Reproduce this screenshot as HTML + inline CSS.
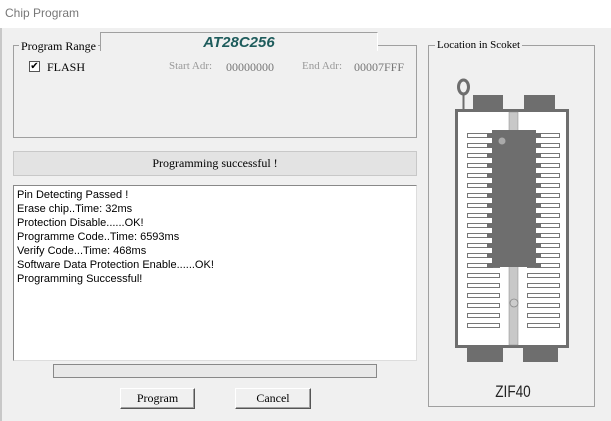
<!DOCTYPE html>
<html><head><style>
body{margin:0;width:611px;height:421px;background:#f0f0f0;position:relative;overflow:hidden;font-family:"Liberation Serif",serif;font-size:11px;}
.a{position:absolute}
.title{left:0;top:0;width:611px;height:28px;background:#fff;}
.title span{position:absolute;left:5px;top:6px;font-family:"Liberation Sans",sans-serif;font-size:12px;color:#777}
.grp{border:1px solid #a0a0a0;box-sizing:border-box}
.lbl{background:#f0f0f0;padding:0 2px;color:#000}
.log div{font-family:"Liberation Sans",sans-serif;font-size:11px;height:14px;line-height:14px;color:#000}
.btn{background:#f0f0f0;border:1px solid;border-color:#fff #555 #555 #fff;box-shadow:inset -1px -1px 0 #a0a0a0;box-sizing:border-box;text-align:center;line-height:19px;font-size:12px}
.gray{color:#999}
</style></head><body>
<div class="a" style="left:0;top:0;width:2px;height:421px;background:#c8c8c8"></div>
<div class="a title"><span>Chip Program</span></div>

<div class="a grp" style="left:13px;top:45px;width:404px;height:93px"></div>
<div class="a lbl" style="left:19px;top:39px;font-size:12px">Program Range</div>
<div class="a" style="left:100px;top:32px;width:278px;height:19px;background:#f0f0f0;border-top:1px solid #a0a0a0;border-left:1px solid #a0a0a0;border-right:1px solid #fff;box-sizing:border-box;text-align:center;font-family:'Liberation Sans',sans-serif;font-weight:bold;font-style:italic;font-size:15px;color:#1e5c5c;line-height:19px">AT28C256</div>
<div class="a" style="left:29px;top:61px;width:11px;height:11px;background:#fff;border:1px solid #555;box-sizing:border-box;font-size:10px;line-height:9px;text-align:center;font-weight:bold;font-family:'DejaVu Sans',sans-serif">✔</div>
<div class="a" style="left:47px;top:60px;font-size:12px">FLASH</div>
<div class="a gray" style="left:169px;top:60px;font-size:11px">Start Adr:</div>
<div class="a" style="left:226px;top:60px;font-size:12px;color:#777">00000000</div>
<div class="a gray" style="left:302px;top:60px;font-size:11px">End Adr:</div>
<div class="a" style="left:354px;top:60px;font-size:12px;color:#777">00007FFF</div>

<div class="a" style="left:13px;top:151px;width:404px;height:25px;background:#e3e3e3;border:1px solid #c8c8c8;box-sizing:border-box;text-align:center;line-height:23px;font-size:12px">Programming successful !</div>

<div class="a log" style="left:13px;top:185px;width:404px;height:176px;background:#fff;border:1px solid;border-color:#888 #ddd #ddd #888;box-sizing:border-box;padding:2px 0 0 3px">
<div>Pin Detecting Passed !</div><div>Erase chip..Time: 32ms</div><div>Protection Disable......OK!</div><div>Programme Code..Time: 6593ms</div><div>Verify Code...Time: 468ms</div><div>Software Data Protection Enable......OK!</div><div>Programming Successful!</div></div>

<div class="a" style="left:53px;top:364px;width:324px;height:14px;border:1px solid #888;box-sizing:border-box;background:#e8e8e8"></div>
<div class="a btn" style="left:120px;top:388px;width:75px;height:21px">Program</div>
<div class="a btn" style="left:235px;top:388px;width:76px;height:21px">Cancel</div>

<div class="a grp" style="left:428px;top:45px;width:167px;height:362px"></div>
<div class="a lbl" style="left:435px;top:39px;font-size:11px">Location in Scoket</div>
<svg class="a" style="left:0;top:0" width="611" height="421">
<g fill="#6e6e6e">
<rect x="473" y="95" width="30" height="16"/><rect x="524" y="95" width="31" height="16"/>
<rect x="467" y="346" width="36" height="16"/><rect x="523" y="346" width="35" height="16"/>
</g>
<ellipse cx="463.5" cy="87" rx="5" ry="7" fill="none" stroke="#6e6e6e" stroke-width="3"/>
<line x1="463.5" y1="94" x2="463.5" y2="111" stroke="#6e6e6e" stroke-width="2"/>
<rect x="456.5" y="110.5" width="111" height="236" fill="#fff" stroke="#6e6e6e" stroke-width="3"/>
<rect x="509" y="112" width="9" height="233" fill="#c8c8c8" stroke="#888" stroke-width="0.5"/>
<g fill="#fff" stroke="#555" stroke-width="0.8" id="p">
<rect x="467.5" y="133.5" width="32" height="4"/><rect x="467.5" y="143.5" width="32" height="4"/><rect x="467.5" y="153.5" width="32" height="4"/><rect x="467.5" y="163.5" width="32" height="4"/><rect x="467.5" y="173.5" width="32" height="4"/><rect x="467.5" y="183.5" width="32" height="4"/><rect x="467.5" y="193.5" width="32" height="4"/><rect x="467.5" y="203.5" width="32" height="4"/><rect x="467.5" y="213.5" width="32" height="4"/><rect x="467.5" y="223.5" width="32" height="4"/><rect x="467.5" y="233.5" width="32" height="4"/><rect x="467.5" y="243.5" width="32" height="4"/><rect x="467.5" y="253.5" width="32" height="4"/><rect x="467.5" y="263.5" width="32" height="4"/><rect x="467.5" y="273.5" width="32" height="4"/><rect x="467.5" y="283.5" width="32" height="4"/><rect x="467.5" y="293.5" width="32" height="4"/><rect x="467.5" y="303.5" width="32" height="4"/><rect x="467.5" y="313.5" width="32" height="4"/><rect x="467.5" y="323.5" width="32" height="4"/>
</g>
<use href="#p" x="60"/>
<g fill="#6e6e6e" id="d">
<rect x="487" y="133" width="6" height="5"/><rect x="487" y="143" width="6" height="5"/><rect x="487" y="153" width="6" height="5"/><rect x="487" y="163" width="6" height="5"/><rect x="487" y="173" width="6" height="5"/><rect x="487" y="183" width="6" height="5"/><rect x="487" y="193" width="6" height="5"/><rect x="487" y="203" width="6" height="5"/><rect x="487" y="213" width="6" height="5"/><rect x="487" y="223" width="6" height="5"/><rect x="487" y="233" width="6" height="5"/><rect x="487" y="243" width="6" height="5"/><rect x="487" y="253" width="6" height="5"/><rect x="487" y="263" width="6" height="5"/>
</g>
<use href="#d" x="48"/>
<rect x="492" y="130" width="44" height="137" fill="#6e6e6e"/>
<circle cx="502" cy="141" r="3.5" fill="#aaa"/>
<circle cx="514" cy="303" r="4" fill="#ccc" stroke="#888" stroke-width="0.8"/>
<text x="0" y="0" text-anchor="middle" font-family="Liberation Sans,sans-serif" font-size="17" fill="#222" transform="translate(513,397) scale(0.8,1)">ZIF40</text>
</svg>
</body></html>
